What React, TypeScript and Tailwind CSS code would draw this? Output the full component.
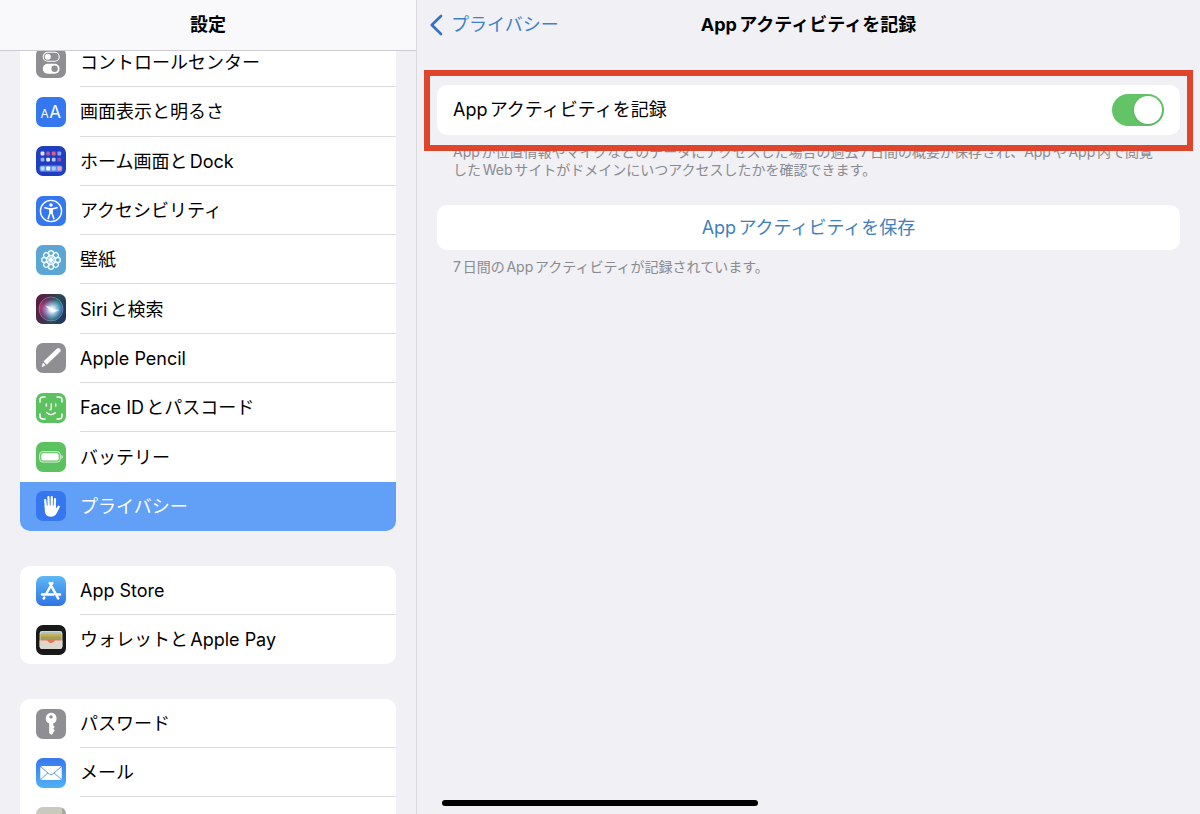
import React, { useState } from "react";

type IconProps = { children: React.ReactNode; tile: string };

function Tile({ children, tile }: IconProps) {
  return (
    <span className={`block size-[30px] shrink-0 overflow-hidden rounded-[7px] ${tile}`}>
      <svg viewBox="0 0 30 30" className="block size-full" aria-hidden="true">
        {children}
      </svg>
    </span>
  );
}

const controlCenter = (
  <Tile tile="bg-[#8e8e93]">
    <rect x="7.2" y="4.2" width="16" height="9" rx="4.5" fill="none" stroke="#fff" strokeWidth="1.1" />
    <circle cx="11.8" cy="8.7" r="3" fill="#fff" />
    <rect x="6.8" y="15.8" width="16.8" height="10" rx="5" fill="#fff" />
    <circle cx="18.6" cy="20.8" r="3.2" fill="#8e8e93" />
  </Tile>
);

const display = (
  <Tile tile="bg-[#3577ee]">
    <text x="4.6" y="21" fontFamily="Inter, sans-serif" fontSize="12" fill="#fff">A</text>
    <text x="13.2" y="21" fontFamily="Inter, sans-serif" fontSize="17" fill="#fff">A</text>
  </Tile>
);

const dotRows = [
  { y: 5.6, colors: ["#dfe6ff", "#a35bb8", "#d95f86", "#8fa2f5"] },
  { y: 11.8, colors: ["#8fb4ff", "#e7ecff", "#b9c7ff", "#8c55b5"] },
];

const homeScreen = (
  <Tile tile="bg-[#1f3fc0]">
    {dotRows.map((row) =>
      row.colors.map((color, i) => (
        <rect key={`${row.y}-${i}`} x={4.6 + i * 5.6} y={row.y} width="3.8" height="3.8" rx="1" fill={color} />
      )),
    )}
    <rect x="3.6" y="19.4" width="22.8" height="6.4" rx="1.8" fill="#5d8bf0" />
    {["#b9e0ff", "#ffffff", "#a9c8ff", "#f0a3b8"].map((color, i) => (
      <rect key={color} x={4.6 + i * 5.6} y="20.6" width="4" height="4" rx="1" fill={color} />
    ))}
  </Tile>
);

const accessibility = (
  <Tile tile="bg-[#3577ee]">
    <circle cx="15" cy="15" r="10.6" fill="none" stroke="#fff" strokeWidth="1.4" />
    <circle cx="15" cy="9" r="1.8" fill="#fff" />
    <path
      d="M8.9 11.7 13 12.8h4l4.1-1.1M15 12.8v4.4M13.9 13v4.4l-1.7 5.2M16.1 13v4.4l1.7 5.2"
      fill="none"
      stroke="#fff"
      strokeWidth="1.6"
      strokeLinecap="round"
      strokeLinejoin="round"
    />
  </Tile>
);

const wallpaper = (
  <Tile tile="bg-[#5ba6d2]">
    <g fill="none" stroke="#e9f7fd" strokeWidth="1.4">
      {[0, 45, 90, 135, 180, 225, 270, 315].map((angle) => (
        <g key={angle} transform={`rotate(${angle} 15 15)`}>
          <circle cx="15" cy="8.2" r="2.5" />
          <path d="M15 15 13.200 11.400a2.100 2.100 0 0 1 3.600 0Z" strokeWidth="1" />
        </g>
      ))}
    </g>
    <circle cx="15" cy="15" r="1.6" fill="#fff" />
  </Tile>
);

const siri = (
  <Tile tile="bg-[#1a1322]">
    <defs>
      <linearGradient id="siri-base" x1="0" y1="0.3" x2="1" y2="0.6">
        <stop offset="0" stopColor="#c02a66" />
        <stop offset="0.4" stopColor="#7a5a94" />
        <stop offset="0.65" stopColor="#3aa59f" />
        <stop offset="1" stopColor="#2a66b8" />
      </linearGradient>
      <radialGradient id="siri-core" cx="0.54" cy="0.53" r="0.45">
        <stop offset="0" stopColor="#fff" />
        <stop offset="0.3" stopColor="#e2edff" stopOpacity="0.85" />
        <stop offset="1" stopColor="#8fb0f0" stopOpacity="0" />
      </radialGradient>
      <linearGradient id="siri-shade" x1="0" y1="0" x2="0" y2="1">
        <stop offset="0" stopColor="#0d1a1c" stopOpacity="0.5" />
        <stop offset="0.4" stopColor="#0d1a1c" stopOpacity="0" />
        <stop offset="1" stopColor="#0b0d2c" stopOpacity="0.3" />
      </linearGradient>
    </defs>
    <rect width="30" height="30" fill="url(#siri-base)" opacity="0.4" />
    <circle cx="15" cy="15" r="12" fill="url(#siri-base)" />
    <circle cx="15" cy="15" r="12" fill="url(#siri-shade)" />
    <circle cx="15" cy="15" r="12" fill="none" stroke="#a5a3bd" strokeWidth="0.7" opacity="0.7" />
    <circle cx="15" cy="15" r="11.5" fill="url(#siri-core)" />
    <path d="M9 11.5c4 .4 6 2 8.400 3.200 2.200 1.100 4.200.6 6.600 1.300-3 .6-4 2.400-7.200 2.200C13.600 18 12.800 14.200 9 11.500Z" fill="#fff" opacity="0.7" />
  </Tile>
);

const pencil = (
  <Tile tile="bg-[#8e8e93]">
    <path
      d="M20.800 6.100c.9-.9 2.200-.9 3 0 .8.800.7 2-.2 2.800L10.800 21.300 7.900 18.500Z"
      fill="#fff"
      stroke="#fff"
      strokeWidth="0.8"
      strokeLinejoin="round"
    />
    <path d="m7 20 2.200 2.200-3.200 1.700Z" fill="#fff" stroke="#fff" strokeWidth="0.5" strokeLinejoin="round" />
  </Tile>
);

const faceId = (
  <Tile tile="bg-[#5bc25f]">
    <g fill="none" stroke="#fff" strokeWidth="1.500" strokeLinecap="round" strokeLinejoin="round">
      <path d="M4 9V7a3 3 0 0 1 3-3h2M21 4h2a3 3 0 0 1 3 3v2M26 21v2a3 3 0 0 1-3 3h-2M9 26H7a3 3 0 0 1-3-3v-2" />
      <path d="M10.300 11v2M19.700 11v2M15.300 11v4.600c0 .8-.4 1.200-1.300 1.200M10.800 19.800c2.400 2.200 6 2.200 8.400 0" />
    </g>
  </Tile>
);

const battery = (
  <Tile tile="bg-[#5bc25f]">
    <rect x="3.700" y="9.700" width="20.600" height="10.400" rx="3" fill="none" stroke="#d9f3da" strokeWidth="1" />
    <rect x="5.300" y="11.300" width="17.400" height="7.200" rx="1.600" fill="#fff" />
    <path d="M25.400 13v3.800c.9-.3 1.400-1 1.400-1.900s-.5-1.600-1.400-1.900Z" fill="#d9f3da" />
  </Tile>
);

const hand = (
  <Tile tile="bg-[#3577ee]">
    <g fill="none" stroke="#fff" strokeWidth="2.200" strokeLinecap="round">
      <path d="M9.200 9l.6 7M12.400 6l.3 9M15.800 6l-.1 9M19 8l-.3 8" />
    </g>
    <path
      d="M8.700 14.500h11.100l.1 3.300 1.500-2.300c.5-.8 1.200-1.100 1.800-.8.700.3.800 1 .4 1.800l-2.600 5.200c-1.300 2.600-3.200 4-6.200 4-3.900 0-5.900-2.400-6-6.100Z"
      fill="#fff"
    />
  </Tile>
);

const appStore = (
  <Tile tile="bg-linear-to-b from-[#5fb8f4] to-[#2f74e4]">
    <g fill="none" stroke="#fff" strokeWidth="2.500" strokeLinecap="round">
      <path d="M16.300 7 9.800 18.500M13.700 7l8.500 15.400M6 18.500h11.400M20.600 18.500H24M8.300 21.500l-.6 1" />
    </g>
  </Tile>
);

const wallet = (
  <Tile tile="bg-[#191919]">
    <rect x="3.600" y="6" width="22.800" height="18" rx="2.400" fill="#d9d5ca" />
    <path d="M4.600 9.200A2.200 2.200 0 0 1 6.800 7h16.400a2.200 2.200 0 0 1 2.200 2.200V11H4.600Z" fill="#a9c3c4" />
    <path d="M4.600 9.200h20.800V13H4.600Z" fill="#d5a93c" />
    <path d="M4.600 11.600h20.800V15H4.600Z" fill="#8fa861" />
    <path d="M4.600 13.800h20.800v3.200H4.600Z" fill="#de7b59" />
    <path d="M3.600 15.600h7c1 0 1.400.6 1.900 1.200 1.500 1.700 3.500 1.700 5 0 .5-.6.900-1.200 1.900-1.200h7v6a2.400 2.400 0 0 1-2.400 2.400H6a2.400 2.400 0 0 1-2.400-2.400Z" fill="#dcd8ce" />
    <path d="M10.600 15.500h8.800c-.8.200-1.300.8-1.700 1.300-1.500 1.800-3.900 1.800-5.400 0-.4-.5-.9-1.100-1.700-1.300Z" fill="#de7b59" />
  </Tile>
);

const passwords = (
  <Tile tile="bg-[#8e8e93]">
    <path
      fillRule="evenodd"
      d="M15 3.700a5.700 5.700 0 0 1 2.200 10.900v1.600l1.500 1.700-1.500 1.900 1.500 1.800-1.500 1.700v1L15.200 26l-2-1.900v-9.500A5.700 5.700 0 0 1 15 3.700Zm0 2.500a1.700 1.700 0 1 0 0 3.400 1.700 1.700 0 0 0 0-3.400Z"
      fill="#fff"
    />
  </Tile>
);

const mail = (
  <Tile tile="bg-linear-to-b from-[#3977ec] to-[#50b0f5]">
    <rect x="4.300" y="8" width="21.400" height="14" rx="2" fill="#fff" />
    <path
      d="m5 9 8.400 7.100c1 .8 2.200.8 3.200 0L25 9M5 21.200l7-6.300M25 21.200l-7-6.300"
      fill="none"
      stroke="#4c93e8"
      strokeWidth="0.900"
    />
  </Tile>
);

const contacts = (
  <Tile tile="bg-[#c9c9bf]">
    <rect x="26" width="4" height="30" fill="#a9a9a2" />
  </Tile>
);

type Item = { id: string; label?: string; icon: React.ReactNode; active?: boolean };

const general: Item[] = [
  { id: "control", label: "コントロールセンター", icon: controlCenter },
  { id: "display", label: "画面表示と明るさ", icon: display },
  { id: "home", label: "ホーム画面とDock", icon: homeScreen },
  { id: "accessibility", label: "アクセシビリティ", icon: accessibility },
  { id: "wallpaper", label: "壁紙", icon: wallpaper },
  { id: "siri", label: "Siriと検索", icon: siri },
  { id: "pencil", label: "Apple Pencil", icon: pencil },
  { id: "face-id", label: "Face IDとパスコード", icon: faceId },
  { id: "battery", label: "バッテリー", icon: battery },
  { id: "privacy", label: "プライバシー", icon: hand, active: true },
];

const store: Item[] = [
  { id: "app-store", label: "App Store", icon: appStore },
  { id: "wallet", label: "ウォレットとApple Pay", icon: wallet },
];

const apps: Item[] = [
  { id: "passwords", label: "パスワード", icon: passwords },
  { id: "mail", label: "メール", icon: mail },
  { id: "contacts", icon: contacts },
];

function Group({ items, shape }: { items: Item[]; shape: string }) {
  return (
    <ul className={`grid shrink-0 auto-rows-fr overflow-hidden bg-white ${shape}`}>
      {items.map((item, i) => {
        const divided = i < items.length - 1 && !items[i + 1].active;
        return (
          <li key={item.id}>
            <a
              href={`#${item.id}`}
              aria-current={item.active ? "page" : undefined}
              className={`flex h-full items-center gap-3.5 pl-4 ${item.active ? "bg-[#629ff7] text-white" : ""}`}
            >
              {item.icon}
              <span
                className={`flex h-full flex-1 items-center border-b pt-0.5 ${divided ? "border-[#dcdcdf]" : "border-transparent"}`}
              >
                {item.label}
              </span>
            </a>
          </li>
        );
      })}
    </ul>
  );
}

export default function App() {
  const [recording, setRecording] = useState(true);

  return (
    <div
      lang="ja"
      className="flex h-screen overflow-hidden bg-[#f0f0f5] font-['Inter','Noto_Sans_CJK_JP',sans-serif] text-lg text-black [text-autospace:normal]"
    >
      <aside className="flex w-[417px] shrink-0 flex-col border-r border-[#d9d9de]">
        <header className="z-10 flex h-[51px] shrink-0 items-center justify-center border-b border-[#cbcbd0] bg-[#f9f9fb]">
          <h1 className="font-bold">設定</h1>
        </header>
        <nav aria-label="設定" className="flex min-h-0 flex-1 flex-col overflow-hidden px-5">
          <div className="-mt-[13px] flex flex-col gap-[35px]">
            <Group items={general} shape="h-[493px] rounded-b-[10px]" />
            <Group items={store} shape="h-[98px] rounded-[10px]" />
            <Group items={apps} shape="h-[147px] rounded-t-[10px]" />
          </div>
        </nav>
      </aside>

      <main className="min-w-0 flex-1">
        <header className="grid h-[50px] grid-cols-[1fr_auto_1fr] items-center px-3">
          <button type="button" className="flex items-center gap-2 text-[#3f80cb]">
            <svg viewBox="0 0 14 22" className="h-[22px] w-[14px]" aria-hidden="true">
              <path
                d="M12 2 2.800 11l9.200 9"
                fill="none"
                stroke="#3572c6"
                strokeWidth="2.700"
                strokeLinecap="round"
                strokeLinejoin="round"
              />
            </svg>
            プライバシー
          </button>
          <h2 className="font-bold">Appアクティビティを記録</h2>
        </header>

        <div className="px-5 pt-[35px]">
          <section>
            <div className="relative">
              <div className="flex h-[50px] items-center justify-between rounded-[10px] bg-white px-4">
                <label htmlFor="record-activity">Appアクティビティを記録</label>
                <input
                  id="record-activity"
                  type="checkbox"
                  role="switch"
                  checked={recording}
                  onChange={(event) => setRecording(event.target.checked)}
                  className="h-8 w-[52px] appearance-none rounded-full bg-[#d9d9de] p-0.5 before:block before:size-7 before:rounded-full before:bg-white before:shadow-sm checked:bg-[#62c466] checked:before:ml-5"
                />
              </div>
              <div className="pointer-events-none absolute -inset-x-[13px] -top-[15px] -bottom-4 border-6 border-[#de452c]" />
            </div>
            <p className="mt-2 px-4 text-sm leading-[18px] text-[#8a8a8f]">
              Appが位置情報やマイクなどのデータにアクセスした場合の過去7日間の概要が保存され、AppやApp内で閲覧したWebサイトがドメインにいつアクセスしたかを確認できます。
            </p>
          </section>

          <section className="mt-[26px]">
            <button
              type="button"
              className="flex h-[45px] w-full items-center justify-center rounded-[10px] bg-white text-[#3f80bd]"
            >
              Appアクティビティを保存
            </button>
            <p className="mt-2 px-4 text-sm leading-[18px] text-[#8a8a8f]">
              7日間のAppアクティビティが記録されています。
            </p>
          </section>
        </div>
      </main>

      <div className="fixed bottom-2 left-1/2 h-1.5 w-[316px] -translate-x-1/2 rounded-full bg-black" />
    </div>
  );
}
